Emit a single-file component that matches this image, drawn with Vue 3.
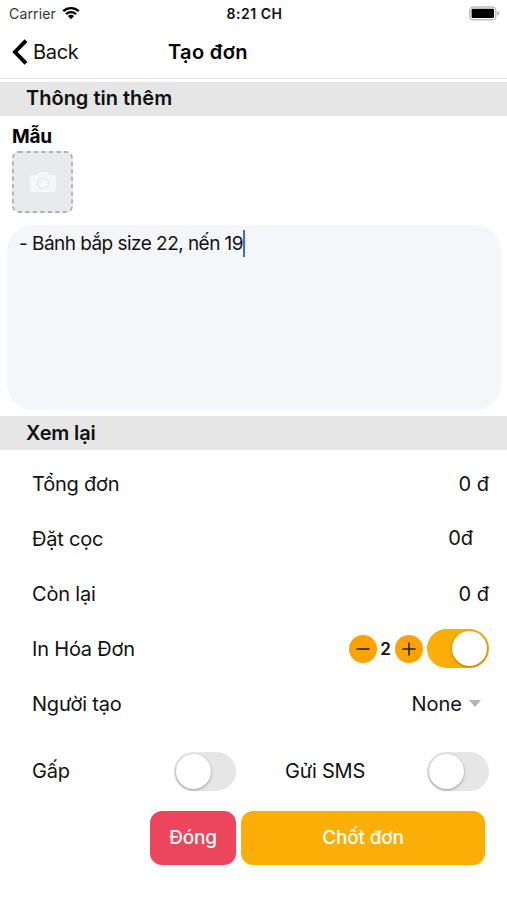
<template>
  <div class="screen">
    <div class="status-bar">
      <div class="carrier">
        <span>Carrier</span>
        <svg class="wifi" viewBox="0 0 18 14" width="18" height="14">
          <path d="M1.2 5.2a11.2 11.2 0 0 1 15.6 0" />
          <path d="M4 8.1a7.2 7.2 0 0 1 10 0" />
          <path class="wifi-dot" d="M9 13.2L5.9 10.1a4.5 4.5 0 0 1 6.2 0z" />
        </svg>
      </div>
      <span class="clock">8:21 CH</span>
      <svg class="battery" viewBox="0 0 32 16" width="32" height="16">
        <rect x="1.8" y="1" width="26" height="12.8" rx="3.6" fill="#fff" stroke="#bdbdbd" stroke-width="1.5" />
        <rect x="3.6" y="2.8" width="22.4" height="9.2" rx="1.2" fill="#000" />
        <path d="M29.4 5.2c1.2.4 1.8 1.2 1.8 2.2s-.6 1.8-1.8 2.2z" fill="#aaa" />
      </svg>
    </div>

    <div class="header">
      <button class="back">
        <svg viewBox="0 0 16 26" width="16" height="26">
          <path d="M14 1.6L3 13l11 11.4" fill="none" stroke="#000" stroke-width="3.9" />
        </svg>
        <span>Back</span>
      </button>
      <h1 class="title">Tạo đơn</h1>
    </div>

    <h2 class="section">Thông tin thêm</h2>
    <div class="sample">
      <span class="sample-label">Mẫu</span>
      <button class="photo">
        <svg class="dashes" viewBox="0 0 61 62" width="61" height="62">
          <rect x="1" y="1" width="59" height="60" rx="6" />
        </svg>
        <svg class="camera" viewBox="0 0 26 22" width="26" height="22">
          <path d="M2 4h5l2-3h8l2 3h5q2 0 2 2v13q0 2-2 2H2q-2 0-2-2V6q0-2 2-2z" fill="#f6f7f9" />
          <circle cx="13" cy="12" r="5.5" fill="none" stroke="#e9eaed" stroke-width="1.6" />
          <path d="M10.5 12a2.6 2.6 0 0 1 2.5-2.6" fill="none" stroke="#e9eaed" stroke-width="1.2" />
        </svg>
      </button>
    </div>
    <div class="note"><span class="note-text">{{ note }}</span><span class="caret"></span></div>

    <h2 class="section review">Xem lại</h2>
    <div class="rows">
      <div class="row">
        <span>Tổng đơn</span>
        <span class="money">0 đ</span>
      </div>
      <div class="row">
        <span>Đặt cọc</span>
        <span class="money deposit">0đ</span>
      </div>
      <div class="row">
        <span>Còn lại</span>
        <span class="money">0 đ</span>
      </div>
      <div class="row">
        <span>In Hóa Đơn</span>
        <div class="print">
          <button class="step" @click="copies > 1 && copies--">
            <svg viewBox="0 0 28 28" width="28" height="28"><path d="M7.5 14h13" /></svg>
          </button>
          <span class="count">{{ copies }}</span>
          <button class="step" @click="copies++">
            <svg viewBox="0 0 28 28" width="28" height="28"><path d="M7.5 14h13M14 7.5v13" /></svg>
          </button>
          <button class="switch" :class="{ on: printBill }" @click="printBill = !printBill"><i></i></button>
        </div>
      </div>
      <div class="row">
        <span>Người tạo</span>
        <div class="select">
          <span>None</span>
          <i class="arrow"></i>
        </div>
      </div>
    </div>

    <div class="options">
      <span>Gấp</span>
      <button class="switch" :class="{ on: urgent }" @click="urgent = !urgent"><i></i></button>
      <span>Gửi SMS</span>
      <button class="switch" :class="{ on: sms }" @click="sms = !sms"><i></i></button>
    </div>

    <div class="actions">
      <button class="btn close">Đóng</button>
      <button class="btn submit">Chốt đơn</button>
    </div>
  </div>
</template>

<script setup>
  import { ref } from 'vue';

  const note = ref('- Bánh bắp size 22, nến 19');
  const copies = ref(2);
  const printBill = ref(true);
  const urgent = ref(false);
  const sms = ref(false);
</script>

<style>
body {
  margin: 0;
  background: #fff;
}
</style>

<style scoped>
.screen {
  height: 900px;
  box-sizing: border-box;
  overflow: hidden;
  background: #fff;
  color: #111;
  font-family: Inter, 'Liberation Sans', sans-serif;
  font-size: 20px;
  line-height: 24px;
  white-space: nowrap;
}

button {
  border: none;
  padding: 0;
  background: none;
  color: inherit;
  font: inherit;
  cursor: pointer;
}

svg {
  display: block;
}

.status-bar {
  display: grid;
  grid-template-columns: 1fr auto 1fr;
  align-items: center;
  height: 27px;
  padding: 0 7px 0 9px;
  font-size: 14px;
}

.carrier {
  display: flex;
  align-items: center;
  gap: 6px;
  color: #333;
  letter-spacing: 0.15px;
}

.wifi {
  margin-top: -2px;
  fill: none;
  stroke: #000;
  stroke-width: 2.3;
}

.wifi .wifi-dot {
  fill: #000;
  stroke: none;
}

.clock {
  font-weight: 600;
  letter-spacing: 0.5px;
}

.battery {
  justify-self: end;
}

.header {
  display: flex;
  align-items: center;
  height: 50px;
  padding-bottom: 1px;
  border-bottom: 1px solid #e8e8e8;
  margin-bottom: 3px;
}

.back {
  display: flex;
  align-items: center;
  gap: 5px;
  width: 168px;
  padding-left: 12px;
  letter-spacing: -0.3px;
}

.title {
  margin: 0;
  color: #000;
  font-size: 20px;
  font-weight: 600;
  letter-spacing: 0.35px;
}

.section {
  height: 34px;
  margin: 0;
  padding-left: 26px;
  background: #e6e6e6;
  font-size: 20px;
  font-weight: 600;
  line-height: 33px;
}

.review {
  line-height: 34px;
  letter-spacing: -0.15px;
}

.sample {
  display: flex;
  flex-direction: column;
  align-items: flex-start;
  gap: 2px;
  padding: 8px 12px 12px;
}

.sample-label {
  color: #000;
  font-size: 19px;
  font-weight: 700;
  letter-spacing: -0.3px;
  line-height: 25px;
}

.photo {
  position: relative;
  display: flex;
  align-items: center;
  justify-content: center;
  width: 61px;
  height: 62px;
  border-radius: 7px;
  background: #e9eaed;
}

.dashes {
  position: absolute;
  inset: 0;
  fill: none;
  stroke: #b0b0b0;
  stroke-width: 1.8;
  stroke-dasharray: 4 3.5;
}

.note {
  display: flex;
  align-items: flex-start;
  height: 185px;
  box-sizing: border-box;
  margin: 0 6px 6px 7px;
  padding: 5px 12px;
  border-radius: 26px;
  background: #f4f6fa;
}

.note-text {
  font-size: 19px;
  letter-spacing: -0.54px;
  line-height: 28px;
}

.caret {
  width: 2px;
  height: 27px;
  background: #4068d8;
}

.rows {
  padding-top: 6px;
}

.row {
  display: flex;
  align-items: center;
  justify-content: space-between;
  height: 55px;
  padding: 0 18px 0 32px;
  letter-spacing: -0.2px;
}

.money {
  letter-spacing: 0;
}

.deposit {
  margin-right: 16px;
  padding-bottom: 2px;
}

.print {
  display: flex;
  align-items: center;
}

.step {
  width: 28px;
  height: 28px;
  border-radius: 50%;
  background: #ffa200;
}

.step path {
  fill: none;
  stroke: #222;
  stroke-width: 1.6;
}

.count {
  width: 18px;
  text-align: center;
  font-size: 17px;
  font-weight: 600;
}

.switch {
  width: 62px;
  height: 39px;
  padding: 2px;
  border-radius: 20px;
  background: #e6e6e6;
}

.switch i {
  display: block;
  width: 35px;
  height: 35px;
  border-radius: 50%;
  background: #fff;
  box-shadow: 0 1px 3px rgba(0, 0, 0, 0.35);
}

.switch.on {
  background: #fbae05;
}

.switch.on i {
  margin-left: auto;
}

.print .switch {
  margin: 0 0.5px 0 4px;
}

.select {
  display: flex;
  align-items: center;
  gap: 7px;
  padding-right: 8px;
  letter-spacing: 0;
}

.arrow {
  border: 6px solid transparent;
  border-top: 7px solid #b5b5b5;
  border-bottom: none;
}

.options {
  display: grid;
  grid-template-columns: 141.5px 111.5px 141.5px 62px;
  align-items: center;
  height: 60px;
  padding: 10px 0 0 32px;
  letter-spacing: -0.2px;
}

.actions {
  display: flex;
  gap: 5px;
  padding: 10px 22px 0 150px;
}

.btn {
  height: 54px;
  border-radius: 12px;
  color: #fff;
  font-size: 19px;
  font-weight: 500;
  letter-spacing: -0.2px;
}

.close {
  width: 86px;
  background: #ec455d;
}

.submit {
  flex: 1;
  background: #fbae05;
}
</style>
